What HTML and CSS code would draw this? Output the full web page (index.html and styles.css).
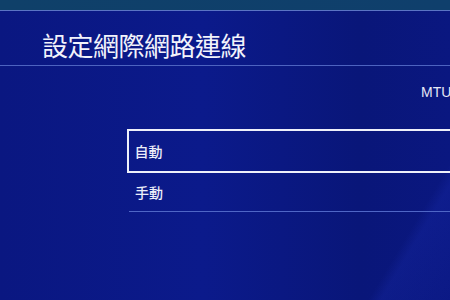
FILE: index.html
```html
<!DOCTYPE html>
<html lang="zh-Hant">
<head>
<meta charset="utf-8">
<link rel="stylesheet" href="styles.css">
</head>
<body>
<div class="screen">
  <div class="topbar"></div>
  <div class="header">
    <h1 class="title">設定網際網路連線</h1>
  </div>
  <div class="main">
    <div class="mtu">MTU</div>
    <ul class="list">
      <li class="item selected">自動</li>
      <li class="item">手動</li>
    </ul>
  </div>
</div>
</body>
</html>
```
FILE: styles.css
```css
html, body {
  margin: 0;
  padding: 0;
}
body {
  width: 450px;
  height: 300px;
  overflow: hidden;
  font-family: "Noto Sans CJK TC", "Noto Sans", sans-serif;
  color: #eef0fa;
}
.screen {
  width: 450px;
  height: 300px;
  overflow: hidden;
  background:
    linear-gradient(121deg, rgba(0,0,0,0) 87%, rgba(30,50,190,0.22) 89%, rgba(20,40,170,0.12) 100%),
    linear-gradient(90deg, #0a1781 0%, #0b1a8b 45%, #091679 80%, #0a1780 100%);
}
.topbar {
  height: 10px;
  background: linear-gradient(90deg, #0f4069, #0f3f6c);
  border-bottom: 1px solid #5b74c4;
}
.header {
  height: 55px;
  border-bottom: 1px solid #4d63c0;
  box-sizing: border-box;
  padding: 21px 0 0 42px;
}
.title {
  margin: 0;
  font-size: 26px;
  line-height: 26px;
  font-weight: 400;
  color: #f2f3fb;
  letter-spacing: -0.5px;
}
.main {
  padding-top: 18px;
}
.mtu {
  padding-left: 421px;
  font-family: "Liberation Sans", "Noto Sans", sans-serif;
  font-size: 14px;
  line-height: 16px;
  white-space: nowrap;
  color: #e6e8f6;
}
.list {
  list-style: none;
  margin: 29px 0 0 127px;
  padding: 0;
  width: 340px;
}
.item {
  font-size: 14px;
  display: flex;
  align-items: center;
  color: #eceef9;
  font-weight: 500;
}
.item.selected {
  height: 44px;
  box-sizing: border-box;
  border: 2.5px solid #eef0fa;
  padding-left: 5.5px;
}
.item + .item {
  height: 39px;
  box-sizing: border-box;
  margin-left: 2px;
  padding-left: 6px;
  border-bottom: 1px solid #4f66c6;
}
```
